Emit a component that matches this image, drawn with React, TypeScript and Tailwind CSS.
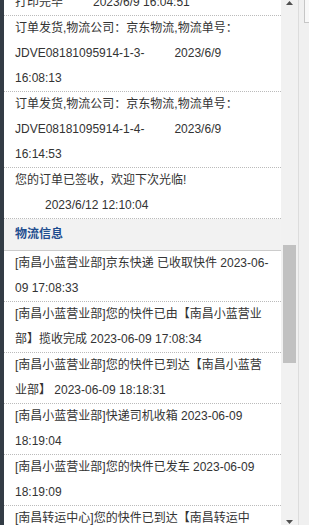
const orderLog = [
  { text: '打印完毕', time: '2023/6/9 16:04:51' },
  { text: '订单发货,物流公司：京东物流,物流单号：JDVE08181095914-1-3-', time: '2023/6/9 16:08:13' },
  { text: '订单发货,物流公司：京东物流,物流单号：JDVE08181095914-1-4-', time: '2023/6/9 16:14:53' },
  { text: '您的订单已签收，欢迎下次光临!', time: '2023/6/12 12:10:04' },
]

const tracking = [
  '[南昌小蓝营业部]京东快递 已收取快件 2023-06-09 17:08:33',
  '[南昌小蓝营业部]您的快件已由【南昌小蓝营业部】揽收完成 2023-06-09 17:08:34',
  '[南昌小蓝营业部]您的快件已到达【南昌小蓝营业部】 2023-06-09 18:18:31',
  '[南昌小蓝营业部]快递司机收箱 2023-06-09 18:19:04',
  '[南昌小蓝营业部]您的快件已发车 2023-06-09 18:19:09',
  '[南昌转运中心]您的快件已到达【南昌转运中心】 2023-06-09 21:12:45',
]

export default function App() {
  return (
    <div className="flex h-[525px] w-[309px] overflow-hidden bg-white font-['Liberation_Sans','Noto_Sans_CJK_SC',sans-serif] text-[12px] text-[#333]">
      <div className="w-[4px] shrink-0 bg-[#333c45]" />

      {/* scrolled content */}
      <div className="min-w-0 flex-1 overflow-hidden">
        <div className="-mt-[10px]">
          <ul>
            {orderLog.map((item, i) => (
              <li
                key={i}
                className="border-b border-dotted border-[#bbb] pl-[11px] pr-[12px] leading-[25px]"
              >
                {item.text}
                <wbr />
                <span className="ml-[30px]">{item.time}</span>
              </li>
            ))}
          </ul>

          <div className="h-[32px] border-b border-[#ccc] bg-[#f2f2f2] pl-[11px] text-[12px] font-bold leading-[31px] text-[#1e4d8f]">
            物流信息
          </div>

          <ul>
            {tracking.map((line, i) => (
              <li
                key={i}
                className="border-b border-dotted border-[#bbb] pl-[11px] pr-[12px] leading-[25px]"
              >
                {line}
              </li>
            ))}
          </ul>
        </div>
      </div>

      {/* scrollbar */}
      <div className="flex w-[17px] shrink-0 flex-col bg-[#f1f1f1]">
        <div className="flex h-[17px] justify-center pt-[1px]">
          <svg width="7" height="4" viewBox="0 0 7 4">
            <path d="M3.5 0L7 4H0z" fill="#505050" />
          </svg>
        </div>
        <div className="flex-1 px-[2px] pt-[228px]">
          <div className="h-[118px] bg-[#c1c1c1]" />
        </div>
        <div className="flex h-[17px] items-end justify-center pb-[1px]">
          <svg width="7" height="4" viewBox="0 0 7 4">
            <path d="M0 0H7L3.5 4z" fill="#505050" />
          </svg>
        </div>
      </div>

      {/* outer edge */}
      <div className="flex w-[11px] shrink-0 justify-end border-l border-[#dcdcdc] bg-[#f0f0f0]">
        <div className="h-[23px] w-[5px] border-b border-l border-[#c6c6c6] bg-[#f8f8f8]" />
      </div>
    </div>
  )
}
